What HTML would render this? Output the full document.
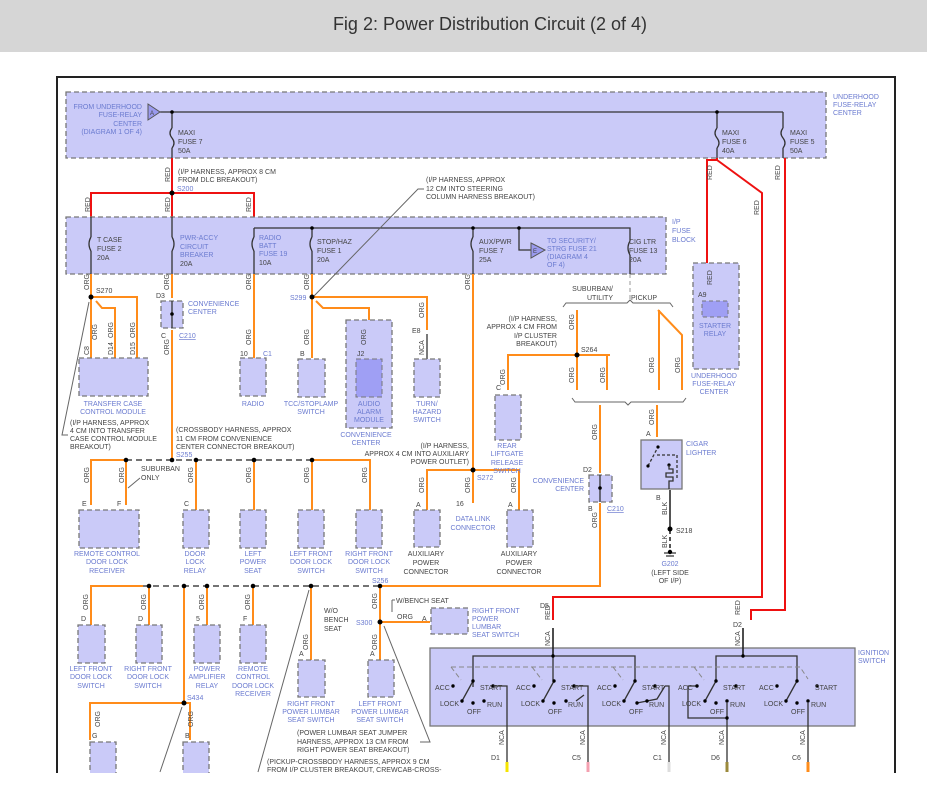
<!DOCTYPE html>
<html><head><meta charset="utf-8"><style>
html,body{margin:0;padding:0;background:#fff;width:927px;height:807px;overflow:hidden}
svg{display:block}
text{font-family:"Liberation Sans",sans-serif;font-size:7px;fill:#444}
.b{fill:#6b7bd0}
.o{stroke:#ff8c1a;stroke-width:2;fill:none}
.r{stroke:#ee1111;stroke-width:2;fill:none}
.k{stroke:#333;stroke-width:1.3;fill:none}
.g{stroke:#666;stroke-width:1;fill:none}
.dk{stroke:#222;stroke-width:1.2;fill:none;stroke-dasharray:6,4}
.bx{fill:#cacaf8;stroke:#777;stroke-width:1.3;stroke-dasharray:5,3}
.bs{fill:#cacaf8;stroke:#777;stroke-width:1.3}
</style></head><body>
<svg width="927" height="807" viewBox="0 0 927 807">
<rect x="0" y="0" width="927" height="52" fill="#d6d6d6"/>
<text x="490" y="30" text-anchor="middle" style="font-size:18px;fill:#333">Fig 2: Power Distribution Circuit (2 of 4)</text>
<!-- frame -->
<path d="M57 772V77H895V772" stroke="#222" stroke-width="2" fill="none"/>

<!-- underhood box -->
<rect class="bx" x="66" y="92" width="760" height="66"/>
<path class="k" d="M160 112H783M172 112V128M172 148V158M717 112V128M717 148V158M783 112V128M783 148V158"/>
<path class="k" d="M172 128q-4 5 0 10q4 5 0 10M717 128q-4 5 0 10q4 5 0 10M783 128q-4 5 0 10q4 5 0 10"/>
<circle cx="172" cy="112" r="1.8"/><circle cx="717" cy="112" r="1.8"/>
<polygon points="148,104 160,112 148,120" fill="#9a9aee" stroke="#555"/>
<text x="150" y="115" style="font-size:6px">A</text>
<text class="b" x="142" y="109" text-anchor="end">FROM UNDERHOOD</text>
<text class="b" x="142" y="117" text-anchor="end">FUSE-RELAY</text>
<text class="b" x="142" y="126" text-anchor="end">CENTER</text>
<text class="b" x="142" y="134" text-anchor="end">(DIAGRAM 1 OF 4)</text>
<text x="178" y="135">MAXI</text><text x="178" y="144">FUSE 7</text><text x="178" y="153">50A</text>
<text x="722" y="135">MAXI</text><text x="722" y="144">FUSE 6</text><text x="722" y="153">40A</text>
<text x="790" y="135">MAXI</text><text x="790" y="144">FUSE 5</text><text x="790" y="153">50A</text>
<text class="b" x="833" y="99">UNDERHOOD</text><text class="b" x="833" y="107">FUSE-RELAY</text><text class="b" x="833" y="115">CENTER</text>

<!-- red wires -->
<path class="r" d="M172 158V217M91 217V193H254V217"/>
<circle cx="172" cy="193" r="2.5"/>
<text x="178" y="174">(I/P HARNESS, APPROX 8 CM</text><text x="178" y="182">FROM DLC BREAKOUT)</text>
<text class="b" x="177" y="191">S200</text>
<path class="r" d="M717 158V160H707V300M717 160L762 193V597H553V620M785 158V610H751V620"/>

<!-- IP fuse block -->
<rect class="bx" x="66" y="217" width="600" height="57"/>
<path class="k" d="M254 228H630V241M91 217V237M91 251V274M172 217V237M172 251V274M254 228V237M254 251V274M312 228V237M312 251V274M473 228V237M473 251V274M630 255V274M519 228V250H531"/>
<path class="k" d="M91 237q-4 7 0 14M172 237q4 7 0 14M254 237q-4 7 0 14M312 237q-4 7 0 14M473 237q-4 7 0 14M630 241q-4 7 0 14"/>
<circle cx="312" cy="228" r="1.8"/><circle cx="473" cy="228" r="1.8"/><circle cx="519" cy="228" r="1.8"/>
<polygon points="531,243 545,250 531,258" fill="#9a9aee" stroke="#555"/>
<text x="533" y="253" style="font-size:6px">E</text>
<text x="97" y="242">T CASE</text><text x="97" y="251">FUSE 2</text><text x="97" y="260">20A</text>
<text class="b" x="180" y="240">PWR-ACCY</text><text class="b" x="180" y="249">CIRCUIT</text><text class="b" x="180" y="257">BREAKER</text><text x="180" y="266">20A</text>
<text class="b" x="259" y="240">RADIO</text><text class="b" x="259" y="248">BATT</text><text class="b" x="259" y="256">FUSE 19</text><text x="259" y="265">10A</text>
<text x="317" y="244">STOP/HAZ</text><text x="317" y="253">FUSE 1</text><text x="317" y="262">20A</text>
<text x="479" y="244">AUX/PWR</text><text x="479" y="253">FUSE 7</text><text x="479" y="262">25A</text>
<text class="b" x="547" y="243">TO SECURITY/</text><text class="b" x="547" y="251">STRG FUSE 21</text><text class="b" x="547" y="259">(DIAGRAM 4</text><text class="b" x="547" y="267">OF 4)</text>
<text x="629" y="244">CIG LTR</text><text x="629" y="253">FUSE 13</text><text x="629" y="262">20A</text>
<text class="b" x="672" y="224">I/P</text><text class="b" x="672" y="233">FUSE</text><text class="b" x="672" y="242">BLOCK</text>
<text x="426" y="182">(I/P HARNESS, APPROX</text><text x="426" y="191">12 CM INTO STEERING</text><text x="426" y="199">COLUMN HARNESS BREAKOUT)</text>
<path class="g" d="M424 189H418L314 296"/>

<!-- T case -->
<path class="o" d="M91 274V358M91 297H137V358M96 301L102 308H115V358"/>
<circle cx="91" cy="297" r="2.5"/>
<text x="96" y="293">S270</text>
<rect class="bx" x="79" y="358" width="69" height="38"/>
<text class="b" x="113" y="406" text-anchor="middle">TRANSFER CASE</text><text class="b" x="113" y="414" text-anchor="middle">CONTROL MODULE</text>
<text x="70" y="425">(I/P HARNESS, APPROX</text><text x="70" y="433">4 CM INTO TRANSFER</text><text x="70" y="441">CASE CONTROL MODULE</text><text x="70" y="449">BREAKOUT)</text>
<path class="g" d="M68 435H62L89 302"/>
<!-- PWR-ACCY -->
<path class="o" d="M172 274V298M172 330V460"/>
<rect class="bx" x="161" y="301" width="22" height="27"/>
<path class="k" d="M172 301V328"/><circle cx="172" cy="314" r="1.8"/>
<text x="156" y="298">D3</text><text x="161" y="338">C</text>
<text class="b" x="188" y="306">CONVENIENCE</text><text class="b" x="188" y="314">CENTER</text>
<text class="b" x="179" y="338" style="text-decoration:underline">C210</text>
<!-- radio -->
<path class="o" d="M254 274V358"/>
<rect class="bx" x="240" y="358" width="26" height="38"/>
<text x="240" y="356">10</text><text class="b" x="263" y="356">C1</text>
<text class="b" x="253" y="406" text-anchor="middle">RADIO</text>
<!-- S299 -->
<path class="o" d="M312 274V358M312 297H427V330M316 301L323 308H369V358"/>
<circle cx="312" cy="297" r="2.5"/>
<text class="b" x="290" y="300">S299</text>
<rect class="bx" x="298" y="359" width="27" height="38"/>
<text x="300" y="356">B</text>
<text class="b" x="311" y="406" text-anchor="middle">TCC/STOPLAMP</text><text class="b" x="311" y="414" text-anchor="middle">SWITCH</text>
<rect class="bx" x="346" y="320" width="46" height="108"/>
<rect x="356" y="359" width="26" height="38" fill="#9f9ff4" stroke="#777" stroke-dasharray="5,3"/>
<text x="357" y="356">J2</text>
<text class="b" x="369" y="406" text-anchor="middle">AUDIO</text><text class="b" x="369" y="414" text-anchor="middle">ALARM</text><text class="b" x="369" y="422" text-anchor="middle">MODULE</text>
<text class="b" x="366" y="437" text-anchor="middle">CONVENIENCE</text><text class="b" x="366" y="445" text-anchor="middle">CENTER</text>
<path class="k" d="M427 334V359"/>
<text x="412" y="333">E8</text>
<rect class="bx" x="414" y="359" width="26" height="38"/>
<text class="b" x="427" y="406" text-anchor="middle">TURN/</text><text class="b" x="427" y="414" text-anchor="middle">HAZARD</text><text class="b" x="427" y="422" text-anchor="middle">SWITCH</text>
<!-- AUX -->
<path class="o" d="M473 274V470M427 510V470H519V510M473 470V503"/>
<circle cx="473" cy="470" r="2.5"/>
<text class="b" x="477" y="480">S272</text>
<text x="469" y="448" text-anchor="end">(I/P HARNESS,</text><text x="469" y="456" text-anchor="end">APPROX 4 CM INTO AUXILIARY</text><text x="469" y="464" text-anchor="end">POWER OUTLET)</text>
<rect class="bx" x="414" y="510" width="26" height="37"/><rect class="bx" x="507" y="510" width="26" height="37"/>
<text x="416" y="507">A</text><text x="508" y="507">A</text><text x="456" y="506">16</text>
<text class="b" x="473" y="521" text-anchor="middle">DATA LINK</text><text class="b" x="473" y="530" text-anchor="middle">CONNECTOR</text>
<text x="426" y="556" text-anchor="middle">AUXILIARY</text><text x="426" y="565" text-anchor="middle">POWER</text><text x="426" y="574" text-anchor="middle">CONNECTOR</text>
<text x="519" y="556" text-anchor="middle">AUXILIARY</text><text x="519" y="565" text-anchor="middle">POWER</text><text x="519" y="574" text-anchor="middle">CONNECTOR</text>
<!-- cig ltr / suburban -->
<path d="M630 274V300" stroke="#999" stroke-dasharray="4,3"/>
<path class="g" d="M563 307l3-4H627l3-3 3 3H670l3 4"/>
<text x="613" y="291" text-anchor="end">SUBURBAN/</text><text x="613" y="300" text-anchor="end">UTILITY</text>
<text x="631" y="300">PICKUP</text>
<path class="o" d="M577 310V390M607 355V390M508 390V355H610M658 310L682 335V390M659 310V390"/>
<circle cx="577" cy="355" r="2.5"/>
<text x="581" y="352">S264</text>
<text x="557" y="321" text-anchor="end">(I/P HARNESS,</text><text x="557" y="329" text-anchor="end">APPROX 4 CM FROM</text><text x="557" y="338" text-anchor="end">I/P CLUSTER</text><text x="557" y="346" text-anchor="end">BREAKOUT)</text>
<path class="g" d="M572 398l3 4H625l3 3 3-3H683l3-4"/>
<rect class="bx" x="495" y="395" width="26" height="45"/>
<text x="496" y="390">C</text>
<text class="b" x="507" y="448" text-anchor="middle">REAR</text><text class="b" x="507" y="456" text-anchor="middle">LIFTGATE</text><text class="b" x="507" y="465" text-anchor="middle">RELEASE</text><text class="b" x="507" y="473" text-anchor="middle">SWITCH</text>
<path class="o" d="M600 405V473M600 503V586H382M657 405V437"/>
<rect class="bx" x="589" y="475" width="23" height="27"/>
<path class="k" d="M600 475V502"/><circle cx="600" cy="488" r="1.8"/>
<text x="583" y="472">D2</text><text x="588" y="511">B</text>
<text class="b" x="584" y="483" text-anchor="end">CONVENIENCE</text><text class="b" x="584" y="491" text-anchor="end">CENTER</text>
<text class="b" x="607" y="511" style="text-decoration:underline">C210</text>
<!-- cigar lighter -->
<rect class="bs" x="641" y="440" width="41" height="49"/>
<path class="k" d="M648 466L658 447M657 455H677V480" stroke-dasharray="3,2"/>
<circle cx="648" cy="466" r="1.6"/><circle cx="658" cy="447" r="1.6"/><circle cx="669" cy="465" r="1.6"/>
<path class="k" d="M669 465v4h4v4h-7v4h7v4h-4v8"/>
<text x="646" y="436">A</text><text class="b" x="686" y="446">CIGAR</text><text class="b" x="686" y="455">LIGHTER</text>
<text x="656" y="500">B</text>
<path d="M670 490V528" stroke="#555" stroke-width="2"/><path d="M670 530V550" stroke="#555" stroke-width="2" stroke-dasharray="4,3"/>
<circle cx="670" cy="529" r="2.5"/><text x="676" y="533">S218</text>
<path class="k" d="M664 553H676M666 556H674"/><circle cx="670" cy="552" r="2.2"/>
<text class="b" x="670" y="566" text-anchor="middle">G202</text><text x="670" y="575" text-anchor="middle">(LEFT SIDE</text><text x="670" y="583" text-anchor="middle">OF I/P)</text>
<!-- starter relay -->
<rect class="bx" x="693" y="263" width="46" height="106"/>
<rect x="702" y="301" width="26" height="16" fill="#9f9ff4" stroke="#777" stroke-dasharray="4,3"/>
<text x="698" y="297">A9</text>
<text class="b" x="715" y="328" text-anchor="middle">STARTER</text><text class="b" x="715" y="336" text-anchor="middle">RELAY</text>
<text class="b" x="714" y="378" text-anchor="middle">UNDERHOOD</text><text class="b" x="714" y="386" text-anchor="middle">FUSE-RELAY</text><text class="b" x="714" y="394" text-anchor="middle">CENTER</text>

<!-- S255 row -->
<path class="o" d="M91 505V460H126V505M196 460V510M254 460V510M312 460V510M312 460H370V510"/>
<path class="dk" d="M126 460H312"/>
<circle cx="126" cy="460" r="2.3"/><circle cx="172" cy="460" r="2.3"/><circle cx="196" cy="460" r="2.3"/><circle cx="254" cy="460" r="2.3"/><circle cx="312" cy="460" r="2.3"/>
<text x="176" y="432">(CROSSBODY HARNESS, APPROX</text><text x="176" y="441">11 CM FROM CONVENIENCE</text><text x="176" y="449">CENTER CONNECTOR BREAKOUT)</text>
<text class="b" x="176" y="457">S255</text>
<text x="141" y="471">SUBURBAN</text><text x="141" y="480">ONLY</text>
<path class="g" d="M140 478L128 488"/>
<rect class="bx" x="79" y="510" width="60" height="38"/>
<rect class="bx" x="183" y="510" width="26" height="38"/><rect class="bx" x="240" y="510" width="26" height="38"/><rect class="bx" x="298" y="510" width="26" height="38"/><rect class="bx" x="356" y="510" width="26" height="38"/>
<text x="82" y="506">E</text><text x="117" y="506">F</text><text x="184" y="506">C</text>
<text class="b" x="107" y="556" text-anchor="middle">REMOTE CONTROL</text><text class="b" x="107" y="564" text-anchor="middle">DOOR LOCK</text><text class="b" x="107" y="573" text-anchor="middle">RECEIVER</text>
<text class="b" x="195" y="556" text-anchor="middle">DOOR</text><text class="b" x="195" y="564" text-anchor="middle">LOCK</text><text class="b" x="195" y="573" text-anchor="middle">RELAY</text>
<text class="b" x="253" y="556" text-anchor="middle">LEFT</text><text class="b" x="253" y="564" text-anchor="middle">POWER</text><text class="b" x="253" y="573" text-anchor="middle">SEAT</text>
<text class="b" x="311" y="556" text-anchor="middle">LEFT FRONT</text><text class="b" x="311" y="564" text-anchor="middle">DOOR LOCK</text><text class="b" x="311" y="573" text-anchor="middle">SWITCH</text>
<text class="b" x="369" y="556" text-anchor="middle">RIGHT FRONT</text><text class="b" x="369" y="564" text-anchor="middle">DOOR LOCK</text><text class="b" x="369" y="573" text-anchor="middle">SWITCH</text>

<!-- S256 row -->
<path class="o" d="M91 625V586H143M149 586V625M207 586V625M253 586V625M184 586V703M311 586V660M380 586V660M380 622H430M90 740V703H184M184 703H190V740"/>
<path class="dk" d="M143 586H380"/>
<circle cx="149" cy="586" r="2.3"/><circle cx="184" cy="586" r="2.3"/><circle cx="207" cy="586" r="2.3"/><circle cx="253" cy="586" r="2.3"/><circle cx="311" cy="586" r="2.3"/><circle cx="380" cy="586" r="2.3"/><circle cx="380" cy="622" r="2.5"/><circle cx="184" cy="703" r="2.5"/>
<text class="b" x="372" y="583">S256</text><text class="b" x="356" y="625">S300</text><text class="b" x="187" y="700">S434</text>
<path class="g" d="M392 600V612M392 600H395"/>
<text x="396" y="603">W/BENCH SEAT</text><text x="397" y="619">ORG</text>
<text x="324" y="613">W/O</text><text x="324" y="622">BENCH</text><text x="324" y="631">SEAT</text>
<rect class="bx" x="78" y="625" width="27" height="38"/><rect class="bx" x="136" y="625" width="26" height="38"/><rect class="bx" x="194" y="625" width="26" height="38"/><rect class="bx" x="240" y="625" width="26" height="38"/>
<rect class="bx" x="298" y="660" width="27" height="37"/><rect class="bx" x="368" y="660" width="26" height="37"/><rect class="bx" x="431" y="608" width="37" height="26"/>
<text x="81" y="621">D</text><text x="138" y="621">D</text><text x="196" y="621">5</text><text x="243" y="621">F</text><text x="299" y="656">A</text><text x="370" y="656">A</text><text x="422" y="621">A</text>
<text class="b" x="91" y="671" text-anchor="middle">LEFT FRONT</text><text class="b" x="91" y="679" text-anchor="middle">DOOR LOCK</text><text class="b" x="91" y="688" text-anchor="middle">SWITCH</text>
<text class="b" x="148" y="671" text-anchor="middle">RIGHT FRONT</text><text class="b" x="148" y="679" text-anchor="middle">DOOR LOCK</text><text class="b" x="148" y="688" text-anchor="middle">SWITCH</text>
<text class="b" x="207" y="671" text-anchor="middle">POWER</text><text class="b" x="207" y="679" text-anchor="middle">AMPLIFIER</text><text class="b" x="207" y="688" text-anchor="middle">RELAY</text>
<text class="b" x="253" y="671" text-anchor="middle">REMOTE</text><text class="b" x="253" y="679" text-anchor="middle">CONTROL</text><text class="b" x="253" y="688" text-anchor="middle">DOOR LOCK</text><text class="b" x="253" y="696" text-anchor="middle">RECEIVER</text>
<text class="b" x="311" y="706" text-anchor="middle">RIGHT FRONT</text><text class="b" x="311" y="714" text-anchor="middle">POWER LUMBAR</text><text class="b" x="311" y="722" text-anchor="middle">SEAT SWITCH</text>
<text class="b" x="380" y="706" text-anchor="middle">LEFT FRONT</text><text class="b" x="380" y="714" text-anchor="middle">POWER LUMBAR</text><text class="b" x="380" y="722" text-anchor="middle">SEAT SWITCH</text>
<text class="b" x="472" y="613">RIGHT FRONT</text><text class="b" x="472" y="621">POWER</text><text class="b" x="472" y="629">LUMBAR</text><text class="b" x="472" y="637">SEAT SWITCH</text>
<text x="297" y="735">(POWER LUMBAR SEAT JUMPER</text><text x="297" y="744">HARNESS, APPROX 13 CM FROM</text><text x="297" y="752">RIGHT POWER SEAT BREAKOUT)</text>
<text x="267" y="764">(PICKUP-CROSSBODY HARNESS, APPROX 9 CM</text><text x="267" y="772">FROM I/P CLUSTER BREAKOUT, CREWCAB-CROSS-</text>
<path class="g" d="M420 742H430L384 626M258 772L309 590M160 772L182 707"/>
<rect class="bx" x="90" y="742" width="26" height="32"/><rect class="bx" x="183" y="742" width="26" height="32"/>
<text x="92" y="738">G</text><text x="185" y="738">B</text>

<!-- ignition -->
<rect class="bs" x="430" y="648" width="425" height="78"/>
<text class="b" x="858" y="655">IGNITION</text><text class="b" x="858" y="663">SWITCH</text>
<path d="M553 628V656M743 628V656" stroke="#222" stroke-width="1.6"/>
<path class="k" d="M473 687V656H635V682M553 656V680M716 682V656H797V680"/>
<path d="M451 667H800l8 12M451 667l10 13M532 667l10 13M613 667l10 13M694 667l10 13" stroke="#888" stroke-dasharray="5,3" fill="none"/>
<g class="k">
<path d="M462 701L473 681M543 701L554 681M624 701L635 681M705 701L716 681M786 701L797 681"/>
<path d="M493 686H507V772M574 686H588V772M665 686H669V772M576 701L584 695M637 703L657 699L665 686M727 703V718H688V686H697M727 718V772M808 703V772"/>
</g>
<g>
<circle cx="462" cy="701" r="1.7"/><circle cx="473" cy="681" r="1.7"/><circle cx="453" cy="686" r="1.7"/><circle cx="473" cy="703" r="1.7"/><circle cx="484" cy="701" r="1.7"/><circle cx="493" cy="686" r="1.7"/>
<circle cx="543" cy="701" r="1.7"/><circle cx="554" cy="681" r="1.7"/><circle cx="534" cy="686" r="1.7"/><circle cx="554" cy="703" r="1.7"/><circle cx="566" cy="701" r="1.7"/><circle cx="574" cy="686" r="1.7"/>
<circle cx="624" cy="701" r="1.7"/><circle cx="635" cy="681" r="1.7"/><circle cx="615" cy="686" r="1.7"/><circle cx="637" cy="703" r="1.7"/><circle cx="647" cy="701" r="1.7"/><circle cx="655" cy="686" r="1.7"/>
<circle cx="705" cy="701" r="1.7"/><circle cx="716" cy="681" r="1.7"/><circle cx="697" cy="686" r="1.7"/><circle cx="716" cy="703" r="1.7"/><circle cx="727" cy="701" r="1.7"/><circle cx="736" cy="686" r="1.7"/>
<circle cx="786" cy="701" r="1.7"/><circle cx="797" cy="681" r="1.7"/><circle cx="777" cy="686" r="1.7"/><circle cx="797" cy="703" r="1.7"/><circle cx="808" cy="701" r="1.7"/><circle cx="817" cy="686" r="1.7"/>
<circle cx="553" cy="656" r="1.7"/><circle cx="743" cy="656" r="1.7"/><circle cx="727" cy="718" r="1.7"/>
</g>
<g>
<text x="435" y="690">ACC</text><text x="440" y="706">LOCK</text><text x="467" y="714">OFF</text><text x="480" y="690">START</text><text x="487" y="707">RUN</text>
<text x="516" y="690">ACC</text><text x="521" y="706">LOCK</text><text x="548" y="714">OFF</text><text x="561" y="690">START</text><text x="568" y="707">RUN</text>
<text x="597" y="690">ACC</text><text x="602" y="706">LOCK</text><text x="629" y="714">OFF</text><text x="642" y="690">START</text><text x="649" y="707">RUN</text>
<text x="678" y="690">ACC</text><text x="682" y="706">LOCK</text><text x="710" y="714">OFF</text><text x="723" y="690">START</text><text x="730" y="707">RUN</text>
<text x="759" y="690">ACC</text><text x="764" y="706">LOCK</text><text x="791" y="714">OFF</text><text x="815" y="690">START</text><text x="811" y="707">RUN</text>
</g>
<text x="491" y="760">D1</text><text x="572" y="760">C5</text><text x="653" y="760">C1</text><text x="711" y="760">D6</text><text x="792" y="760">C6</text>
<path d="M507 762V772" stroke="#f5e400" stroke-width="3"/><path d="M588 762V772" stroke="#f4a0b0" stroke-width="3"/><path d="M669 762V772" stroke="#ddd" stroke-width="3"/><path d="M727 762V772" stroke="#9b8a3c" stroke-width="3"/><path d="M808 762V772" stroke="#ff8c1a" stroke-width="3"/>
<text x="540" y="608">D5</text><text x="733" y="627">D2</text>

<!-- vertical wire labels -->
<g style="font-size:6.5px">
<text transform="translate(170,182) rotate(-90)">RED</text>
<text transform="translate(90,212) rotate(-90)">RED</text><text transform="translate(170,212) rotate(-90)">RED</text><text transform="translate(251,212) rotate(-90)">RED</text>
<text transform="translate(712,180) rotate(-90)">RED</text><text transform="translate(780,180) rotate(-90)">RED</text><text transform="translate(759,215) rotate(-90)">RED</text><text transform="translate(712,285) rotate(-90)">RED</text>
<text transform="translate(89,290) rotate(-90)">ORG</text><text transform="translate(169,290) rotate(-90)">ORG</text><text transform="translate(251,290) rotate(-90)">ORG</text><text transform="translate(309,290) rotate(-90)">ORG</text><text transform="translate(470,290) rotate(-90)">ORG</text>
<text transform="translate(89,355) rotate(-90)">C8</text><text transform="translate(97,340) rotate(-90)">ORG</text><text transform="translate(113,355) rotate(-90)">D14</text><text transform="translate(113,338) rotate(-90)">ORG</text><text transform="translate(135,355) rotate(-90)">D15</text><text transform="translate(135,338) rotate(-90)">ORG</text>
<text transform="translate(169,355) rotate(-90)">ORG</text><text transform="translate(251,345) rotate(-90)">ORG</text><text transform="translate(309,345) rotate(-90)">ORG</text><text transform="translate(366,345) rotate(-90)">ORG</text><text transform="translate(424,318) rotate(-90)">ORG</text><text transform="translate(424,355) rotate(-90)">NCA</text>
<text transform="translate(574,330) rotate(-90)">ORG</text><text transform="translate(574,383) rotate(-90)">ORG</text><text transform="translate(605,383) rotate(-90)">ORG</text><text transform="translate(505,385) rotate(-90)">ORG</text><text transform="translate(654,373) rotate(-90)">ORG</text><text transform="translate(680,373) rotate(-90)">ORG</text>
<text transform="translate(597,440) rotate(-90)">ORG</text><text transform="translate(654,425) rotate(-90)">ORG</text><text transform="translate(597,528) rotate(-90)">ORG</text>
<text transform="translate(667,515) rotate(-90)">BLK</text><text transform="translate(667,548) rotate(-90)">BLK</text>
<text transform="translate(89,483) rotate(-90)">ORG</text><text transform="translate(124,483) rotate(-90)">ORG</text><text transform="translate(193,483) rotate(-90)">ORG</text><text transform="translate(251,483) rotate(-90)">ORG</text><text transform="translate(309,483) rotate(-90)">ORG</text><text transform="translate(367,483) rotate(-90)">ORG</text>
<text transform="translate(424,493) rotate(-90)">ORG</text><text transform="translate(470,493) rotate(-90)">ORG</text><text transform="translate(516,493) rotate(-90)">ORG</text>
<text transform="translate(88,610) rotate(-90)">ORG</text><text transform="translate(146,610) rotate(-90)">ORG</text><text transform="translate(204,610) rotate(-90)">ORG</text><text transform="translate(250,610) rotate(-90)">ORG</text>
<text transform="translate(308,650) rotate(-90)">ORG</text><text transform="translate(377,609) rotate(-90)">ORG</text><text transform="translate(377,650) rotate(-90)">ORG</text>
<text transform="translate(100,727) rotate(-90)">ORG</text><text transform="translate(193,727) rotate(-90)">ORG</text>
<text transform="translate(550,620) rotate(-90)">RED</text><text transform="translate(740,615) rotate(-90)">RED</text><text transform="translate(550,646) rotate(-90)">NCA</text><text transform="translate(740,646) rotate(-90)">NCA</text>
<text transform="translate(504,745) rotate(-90)">NCA</text><text transform="translate(585,745) rotate(-90)">NCA</text><text transform="translate(666,745) rotate(-90)">NCA</text><text transform="translate(724,745) rotate(-90)">NCA</text><text transform="translate(805,745) rotate(-90)">NCA</text>
</g>
<rect x="0" y="773" width="927" height="34" fill="#fff"/>
<path d="M57 773V772M895 773V772" stroke="#222" stroke-width="2"/>
</svg>
</body></html>
